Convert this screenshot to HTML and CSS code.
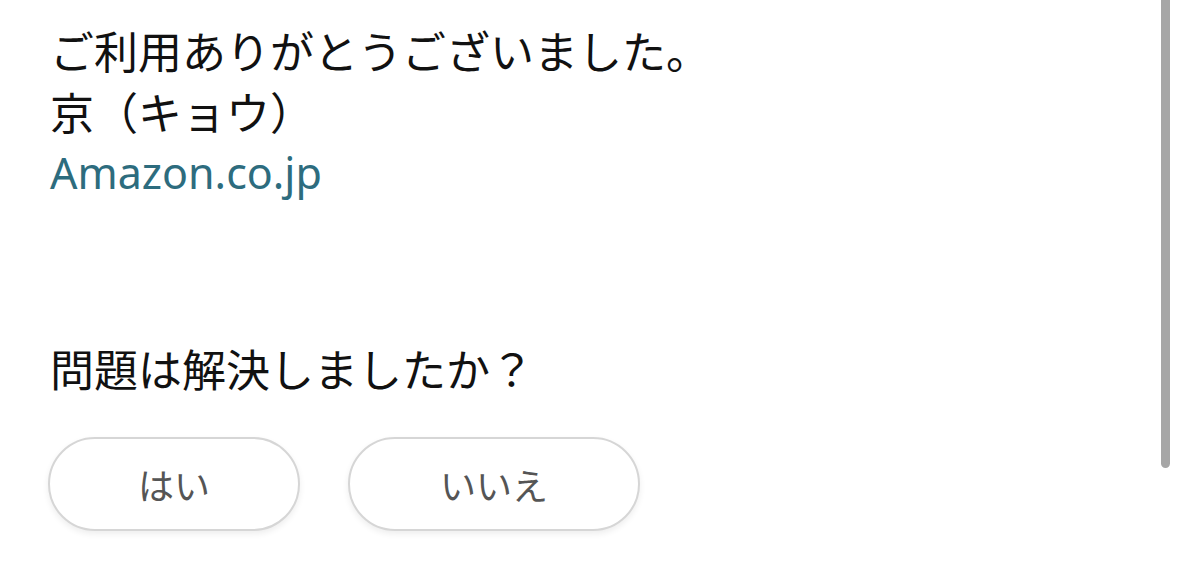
FILE: index.html
```html
<!DOCTYPE html>
<html lang="ja">
<head>
<meta charset="utf-8">
<title>Amazon</title>
<link rel="stylesheet" href="styles.css">
</head>
<body>
<div class="page">
  <div class="message">
    <p class="line">ご利用ありがとうございました。</p>
    <p class="line">京（キョウ）</p>
    <p class="line link">Amazon.co.jp</p>
  </div>
  <div class="feedback">
    <p class="question">問題は解決しましたか？</p>
    <div class="buttons">
      <button class="pill">はい</button>
      <button class="pill pill-wide">いいえ</button>
    </div>
  </div>
</div>
<div class="scrollbar"></div>
</body>
</html>
```
FILE: styles.css
```css
html, body {
  margin: 0;
  padding: 0;
  background: #ffffff;
}
body {
  font-family: "Noto Sans", "Noto Sans CJK JP", sans-serif;
  color: #111111;
  width: 1179px;
  height: 563px;
  overflow: hidden;
  position: relative;
}
.page {
  padding: 20px 0 0 50px;
}
.message {
  display: flex;
  flex-direction: column;
}
.line {
  margin: 0;
  font-size: 44px;
  line-height: 61px;
  font-family: "Noto Sans CJK JP", sans-serif;
}
.line.link {
  font-family: "Noto Sans", "Noto Sans CJK JP", sans-serif;
  color: #2d6c7e;
  font-size: 43px;
}
.feedback {
  margin-top: 135px;
}
.question {
  margin: 0;
  font-size: 44px;
  line-height: 61px;
  font-family: "Noto Sans CJK JP", sans-serif;
}
.buttons {
  display: flex;
  gap: 48px;
  margin: 38px 0 0 -2px;
}
.pill {
  margin: 0;
  height: 94px;
  padding: 0 88px;
  border: 2px solid #d6d6d6;
  border-radius: 47px;
  background: #ffffff;
  box-shadow: 0 3px 6px rgba(0, 0, 0, 0.07);
  font-family: "Noto Sans CJK JP", sans-serif;
  font-size: 36px;
  color: #555555;
  line-height: 1;
}
.pill-wide {
  padding: 0 90px;
}
.scrollbar {
  position: absolute;
  top: 0;
  left: 1161px;
  width: 9px;
  height: 468px;
  background: #a6a6a6;
  border-radius: 0 0 5px 5px;
}
```
